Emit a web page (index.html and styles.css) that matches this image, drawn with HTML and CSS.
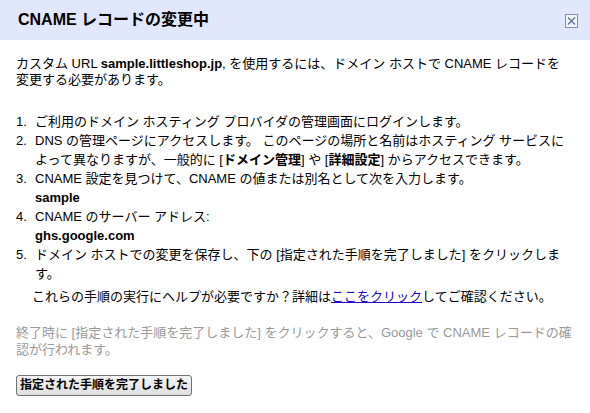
FILE: index.html
```html
<!DOCTYPE html>
<html lang="ja">
<head>
<meta charset="utf-8">
<title>CNAME レコードの変更中</title>
<link rel="stylesheet" href="styles.css">
</head>
<body>
<div class="dialog">
  <div class="header">
    <h1 class="title">CNAME レコードの変更中</h1>
    <span class="close" aria-label="閉じる">
      <svg width="13" height="14" viewBox="0 0 13 14">
        <rect x="0.5" y="0.5" width="12" height="13" fill="#f3f5fd" stroke="#7f90b4"/>
        <path d="M3 3.5 L10 10.5 M10 3.5 L3 10.5" stroke="#6b7fa6" stroke-width="1.6"/>
      </svg>
    </span>
  </div>
  <div class="content">
    <p class="intro">カスタム URL <b>sample.littleshop.jp</b>, を使用するには、ドメイン ホストで CNAME レコードを<br>変更する必要があります。</p>
    <ol class="steps">
      <li>ご利用のドメイン ホスティング プロバイダの管理画面にログインします。</li>
      <li>DNS の管理ページにアクセスします。 このページの場所と名前はホスティング サービスによって異なりますが、一般的に [<b>ドメイン管理</b>] や [<b>詳細設定</b>] からアクセスできます。</li>
      <li>CNAME 設定を見つけて、CNAME の値または別名として次を入力します。<br><b>sample</b></li>
      <li>CNAME のサーバー アドレス:<br><b>ghs.google.com</b></li>
      <li>ドメイン ホストでの変更を保存し、下の [指定された手順を完了しました] をクリックします。</li>
    </ol>
    <p class="help">これらの手順の実行にヘルプが必要ですか？詳細は<a href="#" class="link">ここをクリック</a>してご確認ください。</p>
    <p class="note">終了時に [指定された手順を完了しました] をクリックすると、Google で CNAME レコードの確認が行われます。</p>
    <button class="done" type="button">指定された手順を完了しました</button>
  </div>
</div>
</body>
</html>
```

FILE: styles.css
```css
html, body {
  margin: 0;
  padding: 0;
  background: #fff;
}
body {
  font-family: "Liberation Sans", "Noto Sans CJK JP", sans-serif;
  font-size: 13px;
  color: #000;
}
.dialog {
  width: 590px;
}
.header {
  height: 40px;
  background: #e1e7fd;
  display: flex;
  align-items: center;
  justify-content: space-between;
  padding: 0 12px 0 18px;
}
.title {
  margin: 0;
  font-size: 16px;
  font-weight: bold;
  line-height: 20px;
}
.close {
  display: flex;
  margin-top: 1px;
}
.content {
  padding: 16px 15px 0 16px;
}
.intro {
  margin: 0;
  line-height: 16px;
}
.steps {
  list-style: none;
  counter-reset: step;
  margin: 24px 0 0 0;
  padding: 0;
  line-height: 19px;
}
.steps li {
  counter-increment: step;
  padding-left: 19px;
}
.steps li::before {
  content: counter(step) ".";
  display: inline-block;
  width: 19px;
  margin-left: -19px;
}
.help {
  margin: 4px 0 0 16px;
  line-height: 19px;
}
.link {
  color: #2200cc;
  text-decoration: underline;
}
.note {
  margin: 18px 0 0 0;
  line-height: 17px;
  color: #999;
}
.done {
  display: block;
  margin: 17px 0 0 0;
  height: 21px;
  padding: 0 3px;
  font-family: "Liberation Sans", "Noto Sans CJK JP", sans-serif;
  font-size: 12px;
  font-weight: bold;
  color: #000;
  border: 1px solid #707070;
  border-radius: 3px;
  background: linear-gradient(#f6f6f6, #dedede);
  line-height: 17px;
}
```
